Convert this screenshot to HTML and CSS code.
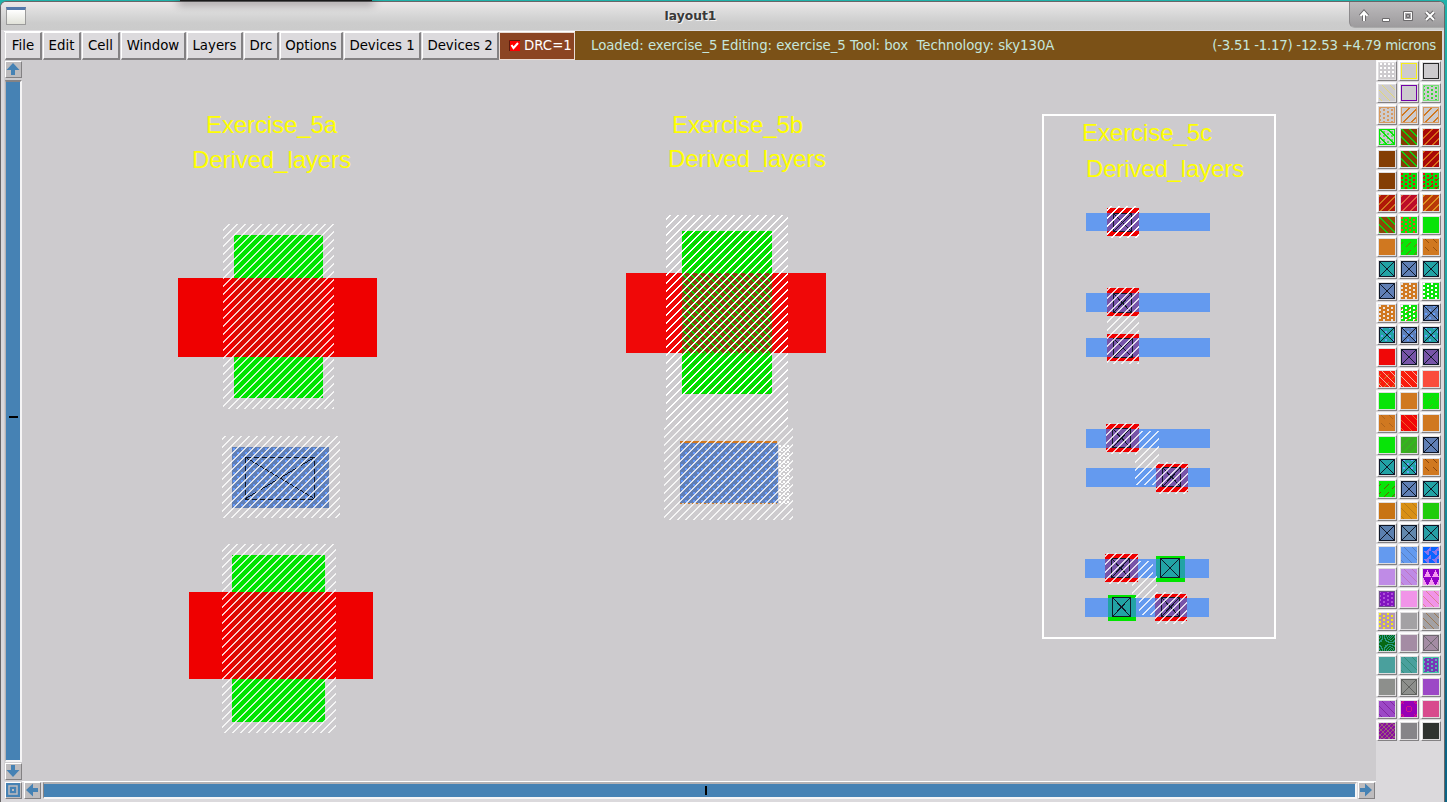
FILE: index.html
```html
<!DOCTYPE html>
<html lang="en">
<head>
<meta charset="utf-8">
<title>layout1</title>
<link rel="stylesheet" href="styles.css">
</head>
<body>
<div class="desktop">
  <div class="shade"></div>
  <div class="window">
    <header class="titlebar">
      <span class="app-icon"></span>
      <span class="title">layout1</span>
      <span class="controls">
        <svg width="95" height="26" viewBox="0 0 95 26" fill="none">
          <g stroke="#6c6a6c" stroke-width="4"><path d="M14 19v-8M10.500 14l3.500-4 3.500 4"/><path d="M76 10l8 8M84 10l-8 8"/></g>
          <g stroke="#fff" stroke-width="2"><path d="M14 19v-8M10.500 14l3.500-4 3.500 4"/><path d="M76 10l8 8M84 10l-8 8"/></g>
          <path fill="#fff" stroke="#6c6a6c" d="M32.500 16.500h7v3h-7z"/>
          <path stroke="#6c6a6c" d="M53.500 9.500h9v9h-9zM56.500 12.500h3v3h-3z"/><path stroke="#fff" d="M54.500 10.500h7v7h-7z"/>
        </svg>
      </span>
    </header>
    <nav class="menubar">
      <button class="menu w-file">File</button><button class="menu w-edit">Edit</button><button class="menu w-cell">Cell</button><button class="menu w-window">Window</button><button class="menu w-layers">Layers</button><button class="menu w-drc">Drc</button><button class="menu w-options">Options</button><button class="menu w-dev">Devices 1</button><button class="menu w-dev2">Devices 2</button>
      <div class="drc"><svg width="11" height="11" viewBox="0 0 11 11"><path fill="#f00" d="M0 0h11v11H0z"/><path d="M.5 11V.5H11" stroke="#5c1a0c" fill="none"/><path d="M2.500 5l2 3 4.500-5" stroke="#fff" stroke-width="2" fill="none"/></svg><span>DRC=1</span></div>
      <div class="status"><span class="loaded">Loaded: exercise_5 Editing: exercise_5 Tool: box&nbsp; Technology: sky130A</span><span class="coords">(-3.51 -1.17) -12.53 +4.79 microns</span></div>
    </nav>
    <main class="work">
      <div class="vscroll">
        <span class="arrow"><svg width="14" height="14" viewBox="0 0 14 14"><path d="M7 1l6.500 7H9v5H5V8H.5z"/></svg></span>
        <span class="vtrack"><i class="vtick"></i></span>
        <span class="arrow"><svg width="14" height="14" viewBox="0 0 14 14"><path d="M7 13l6.500-7H9V1H5v5H.5z"/></svg></span>
      </div>
      <svg class="layout" viewBox="22 60 1354 721" shape-rendering="crispEdges">
        <defs>
          <pattern id="hatch" width="8" height="8" patternUnits="userSpaceOnUse"><path fill="#fff" d="M4 0h2v1h-2zM3 1h2v1h-2zM2 2h2v1h-2zM1 3h2v1h-2zM0 4h2v1h-2zM7 5h1v1h-1zM0 5h1v1h-1zM6 6h2v1h-2zM5 7h2v1h-2z"/></pattern>
          <pattern id="back" width="8" height="8" patternUnits="userSpaceOnUse"><path fill="#00e400" d="M0 0h2v1H0zM1 1h2v1H1zM2 2h2v1H2zM3 3h2v1H3zM4 4h2v1H4zM5 5h2v1H5zM6 6h2v1H6zM7 7h1v1H7zM0 7h1v1H0z"/></pattern>
          <pattern id="dash" width="8" height="8" patternUnits="userSpaceOnUse"><path fill="#46900a" d="M0 1h1v1H0zM7 2h1v1H7zM6 3h1v1H6zM5 4h1v1H5z"/></pattern>
          <pattern id="dots" width="8" height="8" patternUnits="userSpaceOnUse"><path fill="#649aff" d="M1 0h2v2H1zM5 4h2v2H5z"/></pattern>
          <pattern id="wdots" width="4" height="4" patternUnits="userSpaceOnUse"><path fill="#fff" d="M3 1h1v2H3zM0 1h1v2H0zM1 3h2v1H1z"/></pattern>
        </defs>
        <g class="label">
          <text x="206" y="133" textLength="131">Exercise_5a</text><text x="192" y="168" textLength="159">Derived_layers</text>
          <text x="672" y="133" textLength="131">Exercise_5b</text><text x="668" y="167" textLength="158">Derived_layers</text>
          <text x="1082" y="141" textLength="130">Exercise_5c</text><text x="1086" y="177" textLength="158">Derived_layers</text>
        </g>
        <path class="green" d="M234 235h89v163h-89zM232 555h93v167h-93zM682 231h90v163h-90z"/>
        <path fill="url(#dash)" d="M682 231h90v163h-90z"/>
        <path class="red" d="M178 278h199v79H178zM189 592h184v87H189z"/>
        <path class="red-light" d="M626 273h200v80H626z"/>
        <path class="red-over" d="M234 278h89v79h-89zM232 592h93v87h-93z"/>
        <path class="brown" d="M682 273h90v80h-90z"/><path fill="url(#back)" d="M682 273h90v80h-90z"/>
        <path class="orange" d="M680 441h97v3h-97z"/>
        <path class="orange-dots" d="M680 503.500h97"/>
        <path class="steel" d="M232 447h97v61h-97zM680 443h98v60h-98z"/>
        <path fill="url(#dots)" d="M232 447h97v61h-97zM680 443h98v60h-98z"/>
        <path class="contact dashed" d="M245.500 457.500h69v42h-69z"/><path class="contact" d="M245 457l70 42M245 499l70-42"/>
        <path class="hatch" fill="url(#hatch)" d="M223 224h111v185H223zM222 436h118v82H222zM222 544h114v189H222zM664 426h129v94H664z"/>
        <path fill="url(#hatch)" d="M666 215h122v211H666z"/><path fill="url(#wdots)" d="M779 445h11v60h-11z"/>

        <path class="frame" d="M1043 115h232v523h-232z"/>
        <path class="metal" d="M1086 213h124v18h-124zM1086 293h124v19h-124zM1086 338h124v19h-124zM1086 429h124v19h-124zM1086 468h124v19h-124zM1085 559h124v19h-124zM1085 598h124v19h-124z"/>
        <path class="red" d="M1107 208h32v28h-32zM1107 288h32v28h-32zM1107 334h32v27h-32zM1106 424h33v28h-33zM1156 464h32v28h-32zM1105 554h33v28h-33zM1155 594h32v27h-32z"/>
        <path class="violet" d="M1107 213h32v18h-32zM1107 293h32v19h-32zM1107 338h32v19h-32zM1106 429h33v19h-33zM1156 468h32v19h-32zM1105 559h33v19h-33zM1155 598h32v19h-32z"/>
        <path class="green" d="M1156 556h29v26h-29zM1108 595h28v26h-28z"/>
        <path class="teal" d="M1156 559h29v19h-29zM1108 598h28v19h-28z"/>
        <g class="contact">
          <path d="M1113.500 213.500h18v18h-18zl18 18m0-18l-18 18"/>
          <path d="M1113.500 293.500h18v19h-18zl18 19m0-19l-18 19"/>
          <path d="M1113.500 338.500h19v19h-19zl19 19m0-19l-19 19"/>
          <path d="M1112.500 428.500h18v19h-18zl18 19m0-19l-18 19"/>
          <path d="M1162.500 467.500h18v19h-18zl18 19m0-19l-18 19"/>
          <path d="M1111.500 558.500h18v19h-18zl18 19m0-19l-18 19"/>
          <path d="M1161.500 597.500h18v19h-18zl18 19m0-19l-18 19"/>
          <path d="M1160.500 558.500h19v19h-19zl19 19m0-19l-19 19"/>
          <path d="M1112.500 597.500h18v19h-18zl18 19m0-19l-18 19"/>
        </g>
        <path fill="url(#hatch)" d="M1107 206h32v32h-32z"/>
        <path class="hatch" fill="url(#hatch)" d="M1107 287h32v77h-32zM1106 423h33v31h-33zM1139 431h20v54h-24v-31h4zM1156 462h32v32h-32zM1105 553h33v31h-33zM1138 561h15v15h4v22h-1v17h-17v-17h-7v-14h6zM1155 592h32v32h-32z"/>
      </svg>
      <div class="corner"><svg width="14" height="14" viewBox="0 0 14 14"><path fill="#4682b4" d="M0 0h14v14H0z"/><path fill="none" stroke="#bebcbe" stroke-width="1.500" d="M3 3h8v8H3z"/><path fill="#bebcbe" d="M6 6h2v2H6z"/></svg></div>
      <div class="hscroll">
        <span class="arrow"><svg width="14" height="14" viewBox="0 0 14 14"><path d="M1 7l7-6.500V5h5v4H8v4.500z"/></svg></span>
        <span class="htrack"><i class="htick"></i></span>
        <span class="arrow"><svg width="14" height="14" viewBox="0 0 14 14"><path d="M13 7L6 .5V5H1v4h5v4.500z"/></svg></span>
      </div>
      <aside class="palette" id="palette"></aside>
    </main>
  </div>
</div>
<script src="palette.js"></script>
</body>
</html>
```

FILE: styles.css
```css
* { box-sizing: border-box; }
body { margin: 0; overflow: hidden; font-family: "DejaVu Sans", sans-serif; font-size: 13.33px; }
svg { display: block; }
.desktop { position: relative; width: 1447px; height: 802px; padding: 1px 2px 0 0; background: linear-gradient(#20b2aa, #1ea6a8 45%, #0b6485 90%); }
.shade { position: absolute; left: 180px; top: 0; width: 192px; height: 1px; background: #1a1a1a; box-shadow: 0 1px 9px 2px rgba(0,0,0,.45); z-index: 2; clip-path: inset(0 -14px -14px -14px); }
.window { width: 1445px; height: 801px; background: #dbd9dc; border: 1px solid #686668; border-bottom: 0; border-radius: 6px 6px 0 0; padding-left: 3px; overflow: hidden; }
.titlebar { height: 29px; margin-left: -3px; display: grid; grid-template-columns: 60px 1fr 95px; background: linear-gradient(#ece6e8, #dbdbdb 35%, #cccccc 75%, #cbcbcb); border-bottom: 1px solid #dcdadd; }
.app-icon { width: 20px; height: 18px; margin: 5px 0 0 5px; border: 1px solid #9b9b9b; border-top: 3px solid #5378ab; background: linear-gradient(#fff, #e1e2d9); }
.title { text-align: center; font-weight: bold; font-size: 12.300px; line-height: 29px; color: #393939; text-shadow: 1px 1px #f4f4f4; padding-right: 29px; }
.controls { height: 26px; background: linear-gradient(#bdbbbd, #9d9b9d); border-radius: 0 0 0 6px; border-left: 1px solid #8c8a8c; border-bottom: 1px solid #aaa; }
.menubar { height: 29px; display: flex; border-top: 1px solid #fff; margin-right: 2px; }
.menu { height: 28px; padding: 0; margin: 0 1px 0 0; font: inherit; color: #000; background: #dcdadd; border: solid; border-width: 1px 2px 2px 1px; border-color: #fff #838183 #838183 #fff; white-space: nowrap; flex: none; }
.menu.w-file { width: 37px; margin-left: 1px; }
.w-edit { width: 38px; } .w-cell { width: 38px; } .w-window { width: 65px; } .w-layers { width: 56px; } .w-drc { width: 35px; } .w-options { width: 63px; } .w-dev { width: 77px; } .w-dev2 { width: 77px; }
.menu.w-dev2 { margin-right: 0; }
.drc { width: 76px; height: 28px; flex: none; display: flex; align-items: center; gap: 4px; padding: 0 0 1px 9px; background: #8b4423; border: 1px solid #e9dcd6; color: #fff; }
.status { flex: 1; height: 29px; margin-top: -1px; padding: 0 6px 0 16px; display: flex; align-items: center; justify-content: space-between; background: #7b5117; color: #c5e6dc; white-space: nowrap; }
.loaded { letter-spacing: -.06px; }
.coords { letter-spacing: -.27px; }
.work { display: grid; grid-template-columns: 18px 1354px 1fr; grid-template-rows: 721px 21px; }
.vscroll { display: flex; flex-direction: column; padding: 1px 0 1px 1px; background: #cdcbce; }
.arrow, .corner { width: 17px; height: 17px; border: solid; border-width: 1px 1.500px 1.500px 1px; border-color: #fff #838183 #838183 #fff; background: #bebcbe; flex: none; }
.arrow svg { fill: #4682b4; }
.vtrack { flex: 1; width: 17px; margin: 2px 0 1px; border: 2px solid #f5f4f5; border-left: 1px solid #b5b3b5; border-top-color: #858385; background: #4682b4; display: flex; align-items: center; justify-content: center; }
.vtick { width: 9px; height: 2px; background: #000; margin-top: -9px; }
.layout { width: 1354px; height: 721px; background: #cdcbce; }
.palette { grid-column: 3; grid-row: 1 / span 2; display: grid; grid-template-columns: repeat(3, 20px); grid-auto-rows: 20px; gap: 2px; padding: 1px 0 0 1px; }
.swatch { padding: 1px; background: #dfdddf; border: 1px solid; border-color: #fff #838183 #838183 #fff; box-shadow: -1px -1px #f8f7f8; }
.corner { margin: 1px 0 0 1px; grid-row: 2; }
.hscroll { grid-row: 2; grid-column: 2; display: flex; border-top: 1px solid #fff; padding: 0 1px 0 2px; }
.htrack { flex: 1; height: 17px; margin: 0 1px 0 2px; border: 2px solid #f5f4f5; border-left: 1px solid #858385; border-top-color: #b5b3b5; background: #4682b4; display: flex; align-items: center; justify-content: center; }
.htick { width: 2px; height: 9px; background: #000; margin-left: 12px; }
.label { font: 24px "Liberation Sans", Arial, sans-serif; fill: #ff0; }
.green { fill: #00e400; } .red { fill: #ef0000; } .red-light { fill: #f00808; } .red-over { fill: #dd0a02; }
.brown { fill: #8b4010; } .orange { fill: #d07820; } .steel { fill: #607fb5; }
.orange-dots { stroke: #d07820; stroke-dasharray: 2 2; }
.metal { fill: #649aef; } .violet { fill: #7754a8; } .teal { fill: #22a3a5; }
.hatch { opacity: .8; }
.contact { fill: none; stroke: #101828; stroke-width: 1; }
.dashed { stroke-dasharray: 6 2; }
.frame { fill: none; stroke: #fff; stroke-width: 2; }
```

FILE: palette.js
```js
// Stipples: each tests whether a pixel of the 16x16 swatch is inked.
const mod = (n, m) => ((n % m) + m) % m;
const stipple = {
  back: (x, y) => mod(x - y, 8) < 2,
  thin: (x, y) => mod(x - y, 8) === 3,
  fwd: (x, y) => mod(x + y, 8) < 2,
  fdash: (x, y) => mod(x + y, 8) === 4 && y % 8 > 2,
  bdash: (x, y) => mod(x - y, 8) === 2 && y % 8 < 4,
  alt: (x, y) => (mod(x, 8) < 2 && y % 4 < 2) || (mod(x, 8) > 3 && mod(x, 8) < 6 && (y + 2) % 4 < 2),
  sparse: (x, y) => (x % 8 > 1 && x % 8 < 4 && y % 8 < 2) || (x % 8 > 5 && y % 8 > 3 && y % 8 < 6),
  grid: (x, y) => x % 4 > 0 && x % 4 < 3 && y % 4 < 2,
  cross: (x, y) => x === y || x + y === 15,
  box: (x, y) => x === 0 || y === 0 || x === 15 || y === 15,
  spike: (x, y) => mod(x + (y % 8 > 3 ? 2 : 0), 8) > Math.abs(mod(y, 8) - 4) + 2,
  tri: (x, y) => Math.abs(mod(x + (y > 7 ? 4 : 0), 8) - 4) < mod(y, 8) / 2,
  rings: (x, y) => Math.round(Math.hypot(x - 7.5, y - 7.5)) === 3 || (Math.abs(x - 7.5) > 5 && Math.abs(y - 7.5) > 5 && (x + y) % 3 !== 0),
  maze: (x, y) => mod(x * 3 + y * 5 + (x * y >> 1), 7) < 3,
  noise: (x, y) => mod(x + y, 4) === 0 || mod(x - y, 6) === 1
};
const G = '#08e408', O = '#d07820', R = '#f00808', T = '#22a3a5', B = '#607fb5', V = '#7754a8', K = '#101828', Y = '#cdcbce', N = '#843e04', W = '#fff';
const X = base => [base, 'cross', K, 'box', K];
const XD = base => [base, 'sparse', '#64a0ff', 'cross', K, 'box', K];
const swatches = [
  [Y, 'grid', W], [Y, 'box', '#f7ef18'], [Y, 'box', '#282828'],
  [Y, 'thin', '#e2d878'], [Y, 'box', '#7200a8'], [Y, 'alt', '#35dc35', 'box', '#78dc78'],
  [Y, 'alt', '#d69a60', 'box', '#d69a60'], [Y, 'fwd', O, 'box', '#d69a60'], [Y, 'fwd', O, 'box', '#d69a60'],
  [Y, 'alt', '#60dc60', 'back', G, 'box', G], [N, 'back', '#10d010'], ['#a80808', 'fwd', '#d86c18'],
  [N], [N, 'back', '#10d010'], ['#a80808', 'fwd', '#d86c18'],
  [N], ['#08d810', 'alt', R], ['#08d810', 'alt', R, 'fdash', N],
  ['#b01808', 'fwd', O], ['#bc0c28', 'fwd', '#e06040'], ['#b83808', 'fwd', '#e09020'],
  ['#8d4808', 'back', '#10d010'], [G, 'alt', '#f04818'], [G],
  [O], [G, 'fdash', '#806818'], [O, 'bdash', '#98500c'],
  X(T), X(B), X(T),
  X(B), [O, 'alt', '#eee4dc'], [G, 'alt', W],
  [O, 'alt', '#eee4dc'], [G, 'alt', W, 'fdash', O], XD(B),
  XD(T), XD(B), XD(T),
  [R], X(V), X(V),
  ['#f81c0c', 'thin', '#f8b0a0', 'fdash', O], ['#f81c0c', 'thin', '#f8b0a0'], ['#fa4c3c'],
  [G], [O], [G, 'fdash', '#40b818'],
  [O, 'bdash', '#b0641c'], [R, 'thin', '#f06028'], [O],
  [G], ['#3ca824', 'fwd', '#30bc18'], X(B),
  X(T), XD(T), [O, 'bdash', '#88440c'],
  [G, 'fdash', '#685808'], X(B), X(T),
  ['#c87414'], ['#d99014', 'thin', '#b87918'], ['#20cc0c'],
  X('#5b80b0'), X('#6288ad'), X('#259ea5'),
  ['#649aef'], ['#649aef', 'thin', '#577fc0'], ['#0c64ff', 'spike', '#8b74ec'],
  ['#bf8be6'], ['#bf8be6', 'thin', '#bd74bf'], ['#9200c8', 'tri', '#f49af0'],
  ['#8212c0', 'alt', '#ad50d8', 'box', '#70508c'], ['#f194e8'], ['#f194e8', 'thin', '#db8093'],
  ['#b395b5', 'alt', '#f5ea12'], ['#a3a1a4'], ['#a3a1a4', 'thin', '#9b7754'],
  ['#086815', 'maze', '#289982'], ['#a48ca4'], ['#a48ca4', 'cross', '#706870', 'box', '#706870'],
  ['#4aa09d'], ['#4aa09d', 'thin', '#348e7b'], ['#7836b8', 'alt', '#58bab0', 'box', '#44c4a8'],
  ['#8d8f8c'], ['#8d8f8c', 'cross', '#60625f', 'box', '#60625f'], ['#9c48c6'],
  ['#9c48c6', 'thin', '#8128a0'], ['#9700b5', 'rings', '#d0148c'], ['#d84a8d'],
  ['#8b0da0', 'noise', '#98607a'], ['#868488'], ['#303330']
];
const ink = test => {
  let d = '';
  for (let y = 0; y < 16; y++) for (let x = 0; x < 16; x++) if (test(x, y)) d += `M${x} ${y}h1v1h-1z`;
  return d;
};
document.getElementById('palette').innerHTML = swatches.map(([base, ...marks]) => {
  let body = `<path fill="${base}" d="M0 0h16v16H0z"/>`;
  for (let i = 0; i < marks.length; i += 2) body += `<path fill="${marks[i + 1]}" d="${ink(stipple[marks[i]])}"/>`;
  return `<div class="swatch"><svg width="16" height="16" shape-rendering="crispEdges">${body}</svg></div>`;
}).join('');
```
